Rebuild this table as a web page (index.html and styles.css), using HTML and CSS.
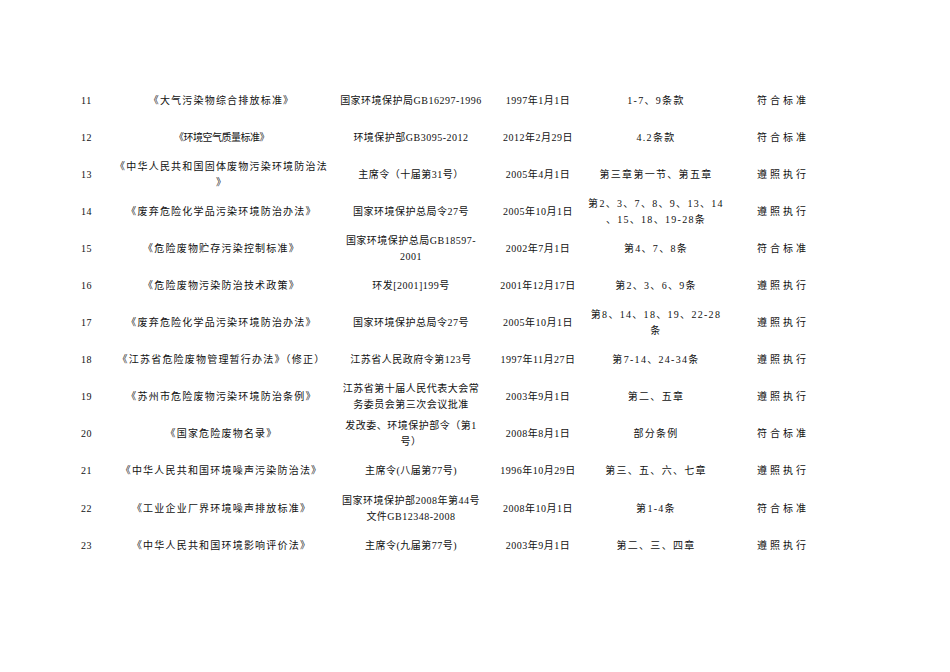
FILE: index.html
```html
<!DOCTYPE html>
<html lang="zh-CN">
<head>
<meta charset="utf-8">
<title>法规清单</title>
<link rel="stylesheet" href="styles.css">
</head>
<body>
<div class="page">
  <div class="table">
    <div class="row"><div class="c num">11</div><div class="c title">《大气污染物综合排放标准》</div><div class="c issuer">国家环境保护局GB16297-1996</div><div class="c date">1997年1月1日</div><div class="c clause">1-7、9条款</div><div class="c status">符合标准</div></div>
    <div class="row"><div class="c num">12</div><div class="c title tight">《环境空气质量标准》</div><div class="c issuer">环境保护部GB3095-2012</div><div class="c date">2012年2月29日</div><div class="c clause">4.2条款</div><div class="c status">符合标准</div></div>
    <div class="row"><div class="c num">13</div><div class="c title">《中华人民共和国固体废物污染环境防治法<br>》</div><div class="c issuer">主席令（十届第31号）</div><div class="c date">2005年4月1日</div><div class="c clause">第三章第一节、第五章</div><div class="c status">遵照执行</div></div>
    <div class="row"><div class="c num">14</div><div class="c title">《废弃危险化学品污染环境防治办法》</div><div class="c issuer">国家环境保护总局令27号</div><div class="c date">2005年10月1日</div><div class="c clause">第2、3、7、8、9、13、14<br>、15、18、19-28条</div><div class="c status">遵照执行</div></div>
    <div class="row"><div class="c num">15</div><div class="c title">《危险废物贮存污染控制标准》</div><div class="c issuer">国家环境保护总局GB18597-<br>2001</div><div class="c date">2002年7月1日</div><div class="c clause">第4、7、8条</div><div class="c status">符合标准</div></div>
    <div class="row"><div class="c num">16</div><div class="c title">《危险废物污染防治技术政策》</div><div class="c issuer">环发[2001]199号</div><div class="c date">2001年12月17日</div><div class="c clause">第2、3、6、9条</div><div class="c status">遵照执行</div></div>
    <div class="row"><div class="c num">17</div><div class="c title">《废弃危险化学品污染环境防治办法》</div><div class="c issuer">国家环境保护总局令27号</div><div class="c date">2005年10月1日</div><div class="c clause">第8、14、18、19、22-28<br>条</div><div class="c status">遵照执行</div></div>
    <div class="row"><div class="c num">18</div><div class="c title">《江苏省危险废物管理暂行办法》（修正）</div><div class="c issuer">江苏省人民政府令第123号</div><div class="c date">1997年11月27日</div><div class="c clause">第7-14、24-34条</div><div class="c status">遵照执行</div></div>
    <div class="row"><div class="c num">19</div><div class="c title">《苏州市危险废物污染环境防治条例》</div><div class="c issuer">江苏省第十届人民代表大会常<br>务委员会第三次会议批准</div><div class="c date">2003年9月1日</div><div class="c clause">第二、五章</div><div class="c status">遵照执行</div></div>
    <div class="row"><div class="c num">20</div><div class="c title">《国家危险废物名录》</div><div class="c issuer">发改委、环境保护部令（第1<br>号）</div><div class="c date">2008年8月1日</div><div class="c clause">部分条例</div><div class="c status">符合标准</div></div>
    <div class="row"><div class="c num">21</div><div class="c title">《中华人民共和国环境噪声污染防治法》</div><div class="c issuer">主席令(八届第77号)</div><div class="c date">1996年10月29日</div><div class="c clause">第三、五、六、七章</div><div class="c status">遵照执行</div></div>
    <div class="row"><div class="c num">22</div><div class="c title">《工业企业厂界环境噪声排放标准》</div><div class="c issuer">国家环境保护部2008年第44号<br>文件GB12348-2008</div><div class="c date">2008年10月1日</div><div class="c clause">第1-4条</div><div class="c status">符合标准</div></div>
    <div class="row"><div class="c num">23</div><div class="c title">《中华人民共和国环境影响评价法》</div><div class="c issuer">主席令(九届第77号)</div><div class="c date">2003年9月1日</div><div class="c clause">第二、三、四章</div><div class="c status">遵照执行</div></div>
  </div>
</div>
</body>
</html>
```

FILE: styles.css
```css
html, body {
  margin: 0;
  padding: 0;
  background: #ffffff;
}

body {
  font-family: "Liberation Serif", "Noto Sans CJK SC", serif;
  font-size: 10px;
  color: #111111;
  width: 950px;
  height: 672px;
  overflow: hidden;
}

.page {
  padding: 82px 0 0 75px;
}

.table {
  display: flex;
  flex-direction: column;
}

.row {
  display: grid;
  grid-template-columns: 38px 217px 162px 92px 144px 110px;
  height: 37.1px;
  align-items: center;
}

.c {
  line-height: 16px;
  white-space: nowrap;
  text-align: center;
}

.num {
  text-align: left;
  padding-left: 6px;
  letter-spacing: 0.6px;
}

.title {
  letter-spacing: 1.2px;
}

.title.tight {
  letter-spacing: -0.5px;
}

.issuer {
  letter-spacing: 0.5px;
}

.date {
  letter-spacing: 0.5px;
}

.clause {
  letter-spacing: 1.3px;
}

.status {
  letter-spacing: 3px;
}
```
